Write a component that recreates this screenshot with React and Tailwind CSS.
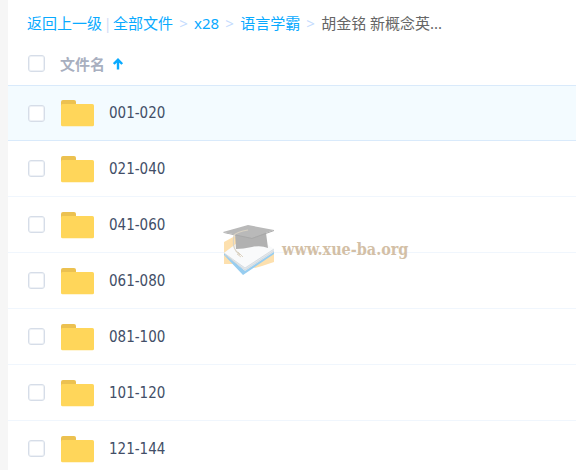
import React from 'react';

const folders = ['001-020', '021-040', '041-060', '061-080', '081-100', '101-120', '121-144'];

const parents = ['全部文件', 'x28', '语言学霸'];

function Checkbox({ label }) {
  return (
    <input
      type="checkbox"
      aria-label={label}
      className="block size-[17px] shrink-0 appearance-none rounded-[3px] border border-[#d6dde8] bg-white inset-ring inset-ring-[#eef1f6] checked:bg-[#09aaff]"
    />
  );
}

function FolderIcon() {
  return (
    <svg viewBox="0 0 34 28" className="block h-7 w-[34px] shrink-0" aria-hidden="true">
      <path d="M1 8V3Q1 1 3 1H14Q16 1 16 3V8Z" fill="#ecc150" />
      <rect x="1" y="5" width="33" height="22.3" rx="1.6" fill="#ffd65a" />
    </svg>
  );
}

function SortArrow() {
  return (
    <svg viewBox="0 0 11 12" className="block h-3 w-[11px]" aria-hidden="true">
      <path d="M5 11.5V2M0.8 6L5 1.8L9.2 6" fill="none" stroke="#09aaff" strokeWidth="2.4" />
    </svg>
  );
}

function Separator() {
  return <span className="w-[21px] text-center text-[15px] text-[#c4dbfe]">&gt;</span>;
}

function Breadcrumb() {
  return (
    <nav className="flex h-[46px] items-center whitespace-nowrap pl-[19px] text-[15px] text-[#09aaff]">
      <a href="#up">返回上一级</a>
      <span className="w-[11px] text-center text-[#d3dcf5]">|</span>
      {parents.map((name) => (
        <React.Fragment key={name}>
          <a href="#folder">{name}</a>
          <Separator />
        </React.Fragment>
      ))}
      <span className="text-[#666]">胡金铭 新概念英...</span>
    </nav>
  );
}

function Watermark() {
  return (
    <div className="pointer-events-none absolute left-[215px] top-56 flex items-center gap-2">
      <svg viewBox="0 0 51 52" className="block h-[52px] w-[51px]" aria-hidden="true">
        <path d="M1 18L12 12L20 20V40H1Z" fill="#fde0ae" />
        <path d="M28 42L51 26V38L39 42L32 44Z" fill="#fde0ae" />
        <path d="M1 31L20 51L51 30V26L21 46L1 29Z" fill="#97cdf0" />
        <path d="M1 29L14 20H42L51 26V28L22 47L6 33Z" fill="#e4e9ed" />
        <path d="M1 29L14 19H42L51 25L22 44Z" fill="#f9fafb" />
        <path d="M1 29L22 44L51 25M2 31L22 46L51 27" fill="none" stroke="#cdd4da" strokeWidth="0.7" />
        <path d="M12 9H43L45 24Q38 21 29 23Q20 25 13 25Z" fill="#b1b1b1" />
        <path d="M0 8L25 1L51 6L29 14Z" fill="#b9b9b9" />
        <path d="M0 8L29 14L51 6V7L29 15L1 9Z" fill="#a8a8a8" />
        <path d="M25 6Q14 8 11 11Q9 22 13 27L17 31" fill="none" stroke="#d9d2c4" strokeWidth="1.2" />
        <path d="M15 28L20 33M14 30L18 33" fill="none" stroke="#ddd3c2" strokeWidth="1" />
      </svg>
      <span className="font-['DejaVu_Serif_Condensed','Liberation_Serif',serif] text-base font-bold leading-5 text-[#d3bfa6]">
        www.xue-ba.org
      </span>
    </div>
  );
}

export default function App() {
  return (
    <div className="h-screen overflow-hidden bg-[#f6f6f6] pl-2 font-['Noto_Sans','Noto_Sans_CJK_SC',sans-serif]">
      <main className="relative min-h-full bg-white">
        <Breadcrumb />
        <table className="w-full border-collapse text-left">
          <thead className="block">
            <tr className="flex h-[39px] items-center pb-1 pl-5">
              <th className="w-[32px]">
                <Checkbox label="全选" />
              </th>
              <th className="flex items-center gap-2 text-[15px] font-bold leading-5 text-[#a8afbf]">
                文件名
                <SortArrow />
              </th>
            </tr>
          </thead>
          <tbody className="block">
            {folders.map((name, i) => (
              <tr
                key={name}
                className={
                  i === 0
                    ? 'flex h-14 items-center border-y border-[#d9eafb] bg-[#f3fbff] pl-5'
                    : 'flex h-14 items-center border-b border-[#f0f6fd] pl-5'
                }
              >
                <td className="w-[32px]">
                  <Checkbox label={name} />
                </td>
                <td className="flex items-center gap-[15px]">
                  <FolderIcon />
                  <span className="font-['DejaVu_Sans_Condensed','Noto_Sans',sans-serif] text-[15px] leading-5 text-[#424e67]">
                    {name}
                  </span>
                </td>
              </tr>
            ))}
          </tbody>
        </table>
        <Watermark />
      </main>
    </div>
  );
}
